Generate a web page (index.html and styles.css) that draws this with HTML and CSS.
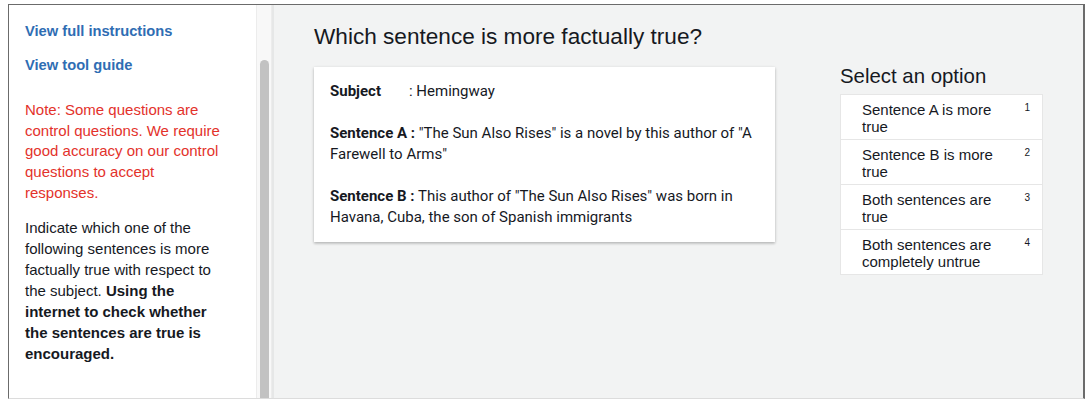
FILE: index.html
```
<!DOCTYPE html>
<html>
<head>
<meta charset="utf-8">
<link rel="stylesheet" href="styles.css">
</head>
<body>
<div class="frame">
  <aside class="sidebar">
    <div class="side-content">
      <a class="link first">View full instructions</a>
      <a class="link">View tool guide</a>
      <p class="note">Note: Some questions are control questions. We require good accuracy on our control questions to accept responses.</p>
      <p class="instr">Indicate which one of the following sentences is more factually true with respect to the subject. <b>Using the internet to check whether the sentences are true is encouraged.</b></p>
    </div>
    <div class="scrolltrack"><div class="thumb"></div></div>
  </aside>
  <main class="main">
    <h1 class="title">Which sentence is more factually true?</h1>
    <div class="columns">
      <div class="card">
        <p><b>Subject</b><span class="gap"></span>: Hemingway</p>
        <p><b>Sentence A :</b> "The Sun Also Rises" is a novel by this author of "A Farewell to Arms"</p>
        <p><b>Sentence B :</b> This author of "The Sun Also Rises" was born in Havana, Cuba, the son of Spanish immigrants</p>
      </div>
      <div class="options">
        <h2 class="opt-title">Select an option</h2>
        <ul class="opt-list">
          <li class="opt"><span class="opt-text">Sentence A is more true</span><span class="key">1</span></li>
          <li class="opt"><span class="opt-text">Sentence B is more true</span><span class="key">2</span></li>
          <li class="opt"><span class="opt-text">Both sentences are true</span><span class="key">3</span></li>
          <li class="opt"><span class="opt-text">Both sentences are completely untrue</span><span class="key">4</span></li>
        </ul>
      </div>
    </div>
  </main>
</div>
</body>
</html>
```
FILE: styles.css
```
html, body {
  margin: 0;
  padding: 0;
  background: #ffffff;
}
.frame {
  margin: 4px 0 0 8px;
  width: 1074px;
  height: 393px;
  border-left: 1px solid #6b6b6b;
  border-top: 1px solid #6b6b6b;
  border-right: 2px solid #6b6b6b;
  border-bottom: 1px solid #dcdcdc;
  display: flex;
  overflow: hidden;
  font-family: "Liberation Sans", Arial, sans-serif;
  color: #16191f;
}
.sidebar {
  width: 263px;
  background: #ffffff;
  display: flex;
  border-right: 2px solid #e6e7e7;
  flex: none;
}
.side-content {
  width: 199px;
  padding: 16px 32px 0 16px;
  font-size: 15px;
}
.link {
  display: block;
  color: #2f6db3;
  font-weight: bold;
  font-size: 14.7px;
  line-height: 20px;
}
.link.first {
  margin-bottom: 14px;
}
.note {
  color: #e3322b;
  margin: 25px 0 0 0;
  line-height: 20.7px;
}
.instr {
  margin: 13px 0 0 0;
  line-height: 21px;
  color: #16191f;
}
.scrolltrack {
  width: 16px;
  background: #f8f8f8;
  border-left: 1px solid #ececec;
  border-right: 1px solid #ececec;
  box-sizing: border-box;
  padding: 55px 2px 0 3px;
}
.thumb {
  height: 100%;
  background: #c2c2c2;
  border-radius: 5px 5px 0 0;
}
.main {
  flex: 1;
  background: #f2f3f3;
  padding: 0 0 0 40px;
}
.title {
  font-size: 22.6px;
  font-weight: normal;
  margin: 19px 0 0 0;
  line-height: 26px;
  color: #16191f;
}
.columns {
  display: flex;
  align-items: flex-start;
  margin-top: 17px;
}
.card {
  width: 461px;
  box-sizing: border-box;
  background: #ffffff;
  padding: 14px 16px 14px 16px;
  box-shadow: 0 1px 3px rgba(0,0,0,0.22), 0 2px 2px rgba(0,0,0,0.08);
  font-family: Roboto, "Liberation Sans", sans-serif;
  font-size: 15px;
  line-height: 21px;
  color: #16191f;
}
.card p {
  margin: 0;
}
.card p + p {
  margin-top: 21px;
}
.card b {
  font-weight: bold;
}
.gap {
  display: inline-block;
  width: 28px;
}
.options {
  margin-left: 65px;
  width: 203px;
}
.opt-title {
  font-size: 20.4px;
  font-weight: normal;
  margin: -3px 0 0 0;
  line-height: 24px;
  color: #16191f;
}
.opt-list {
  list-style: none;
  margin: 6px 0 0 0;
  padding: 0;
  background: #ffffff;
  border: 1px solid #e6e6e6;
}
.opt {
  display: flex;
  justify-content: space-between;
  padding: 6px 12px 4px 21px;
  font-size: 15px;
  line-height: 17px;
  border-top: 1px solid #e6e6e6;
}
.opt:first-child {
  border-top: none;
}
.opt-text {
  width: 145px;
}
.key {
  font-size: 10px;
  line-height: 12px;
  margin-top: 1px;
}
```
